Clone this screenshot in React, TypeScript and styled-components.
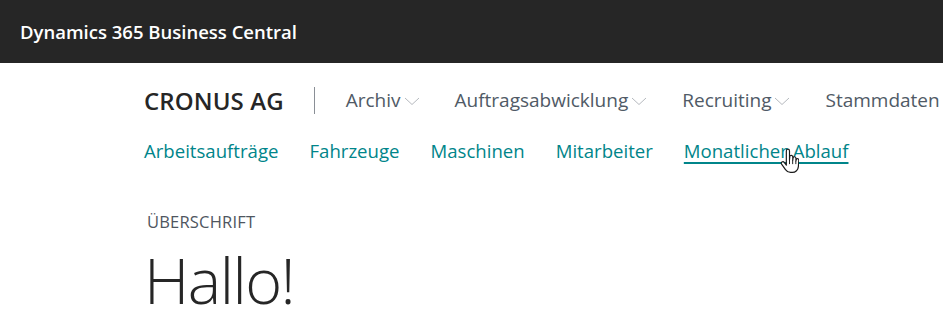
import React from "react";
import styled, { createGlobalStyle } from "styled-components";

const Global = createGlobalStyle`
  html, body { margin: 0; padding: 0; background: #ffffff; }
  body { font-family: "Open Sans", "Noto Sans", sans-serif; overflow: hidden; width: 943px; height: 335px; }
`;

const Header = styled.header`
  height: 63px;
  background: #262626;
  display: flex;
  align-items: center;
  padding-left: 20px;
`;

const Title = styled.span`
  color: #ffffff;
  font-size: 18.5px;
  font-weight: 600;
`;

const Main = styled.main`
  padding-left: 144px;
  white-space: nowrap;
`;

const TopNav = styled.nav`
  display: flex;
  align-items: center;
  height: 74px;
  & > * { flex-shrink: 0; }
`;

const Company = styled.span`
  font-size: 24px;
  font-weight: 600;
  color: #262626;
  letter-spacing: 0.1px;
`;

const Divider = styled.span`
  width: 1px;
  height: 27px;
  background: #8a8f96;
  margin: 0 31px 0 30px;
`;

const Menu = styled.span`
  display: inline-flex;
  align-items: center;
  font-size: 19px;
  color: #505a66;
  margin-right: 35px;
`;

const Chevron = styled.svg`
  width: 16px;
  height: 8px;
  margin-left: 3px;
  margin-top: 1px;
`;

const SubNav = styled.nav`
  display: flex;
  align-items: center;
  gap: 31px;
  height: 28px;
  margin-top: -1px;
`;

const SubLink = styled.a<{ $active?: boolean }>`
  position: relative;
  font-size: 18.6px;
  color: #00858a;
  text-decoration: ${(p) => (p.$active ? "underline" : "none")};
  text-decoration-thickness: 2px;
  text-underline-offset: 4px;
`;

const Cursor = styled.svg`
  position: absolute;
  left: 96px;
  top: 10px;
  width: 19px;
  height: 28px;
`;

const Caption = styled.div`
  margin-top: 46px;
  padding-left: 3px;
  font-size: 16.5px;
  color: #4f5660;
  letter-spacing: 0.2px;
`;

const Hello = styled.h1`
  margin: 12px 0 0 0;
  font-size: 63px;
  font-weight: 300;
  color: #262626;
  line-height: 1.1;
  letter-spacing: -1.5px;
`;

const ChevronDown = () => (
  <Chevron viewBox="0 0 16 8">
    <path d="M1 1 L8 7.5 L15 1" fill="none" stroke="#b5b9be" strokeWidth="1" />
  </Chevron>
);

const menus = ["Archiv", "Auftragsabwicklung", "Recruiting", "Stammdaten"];
const links = ["Arbeitsaufträge", "Fahrzeuge", "Maschinen", "Mitarbeiter"];

export default function App() {
  return (
    <>
      <Global />
      <Header>
        <Title>Dynamics 365 Business Central</Title>
      </Header>
      <Main>
        <TopNav>
          <Company>CRONUS AG</Company>
          <Divider />
          {menus.map((m) => (
            <Menu key={m}>
              {m}
              <ChevronDown />
            </Menu>
          ))}
        </TopNav>
        <SubNav>
          {links.map((l) => (
            <SubLink key={l}>{l}</SubLink>
          ))}
          <SubLink $active>
            Monatlicher Ablauf
            <Cursor viewBox="0 0 18 26">
              <path
                d="M6 2.5c0-1 .7-1.700 1.500-1.700S9 1.500 9 2.500v8.500l.3-3c.1-.9.8-1.400 1.500-1.300.8.1 1.300.7 1.300 1.500v3l.3-2c.1-.8.8-1.300 1.500-1.200.7.1 1.200.7 1.200 1.500v2.500l.3-1.200c.2-.7.9-1.100 1.500-.9.6.2 1 .8.9 1.500l-.4 6c-.2 3-2.600 5.500-5.800 5.500H10c-2 0-3.600-1-4.800-2.700L1.500 15c-.5-.8-.3-1.700.4-2.100.7-.4 1.600-.2 2.100.5L6 16z"
                fill="#ffffff"
                stroke="#1a1a1a"
                strokeWidth="1.1"
                strokeLinejoin="round"
              />
              <path d="M9 11v4M12 11v4M15 12v3" stroke="#1a1a1a" strokeWidth="0.9" />
            </Cursor>
          </SubLink>
        </SubNav>
        <Caption>ÜBERSCHRIFT</Caption>
        <Hello>Hallo!</Hello>
      </Main>
    </>
  );
}
